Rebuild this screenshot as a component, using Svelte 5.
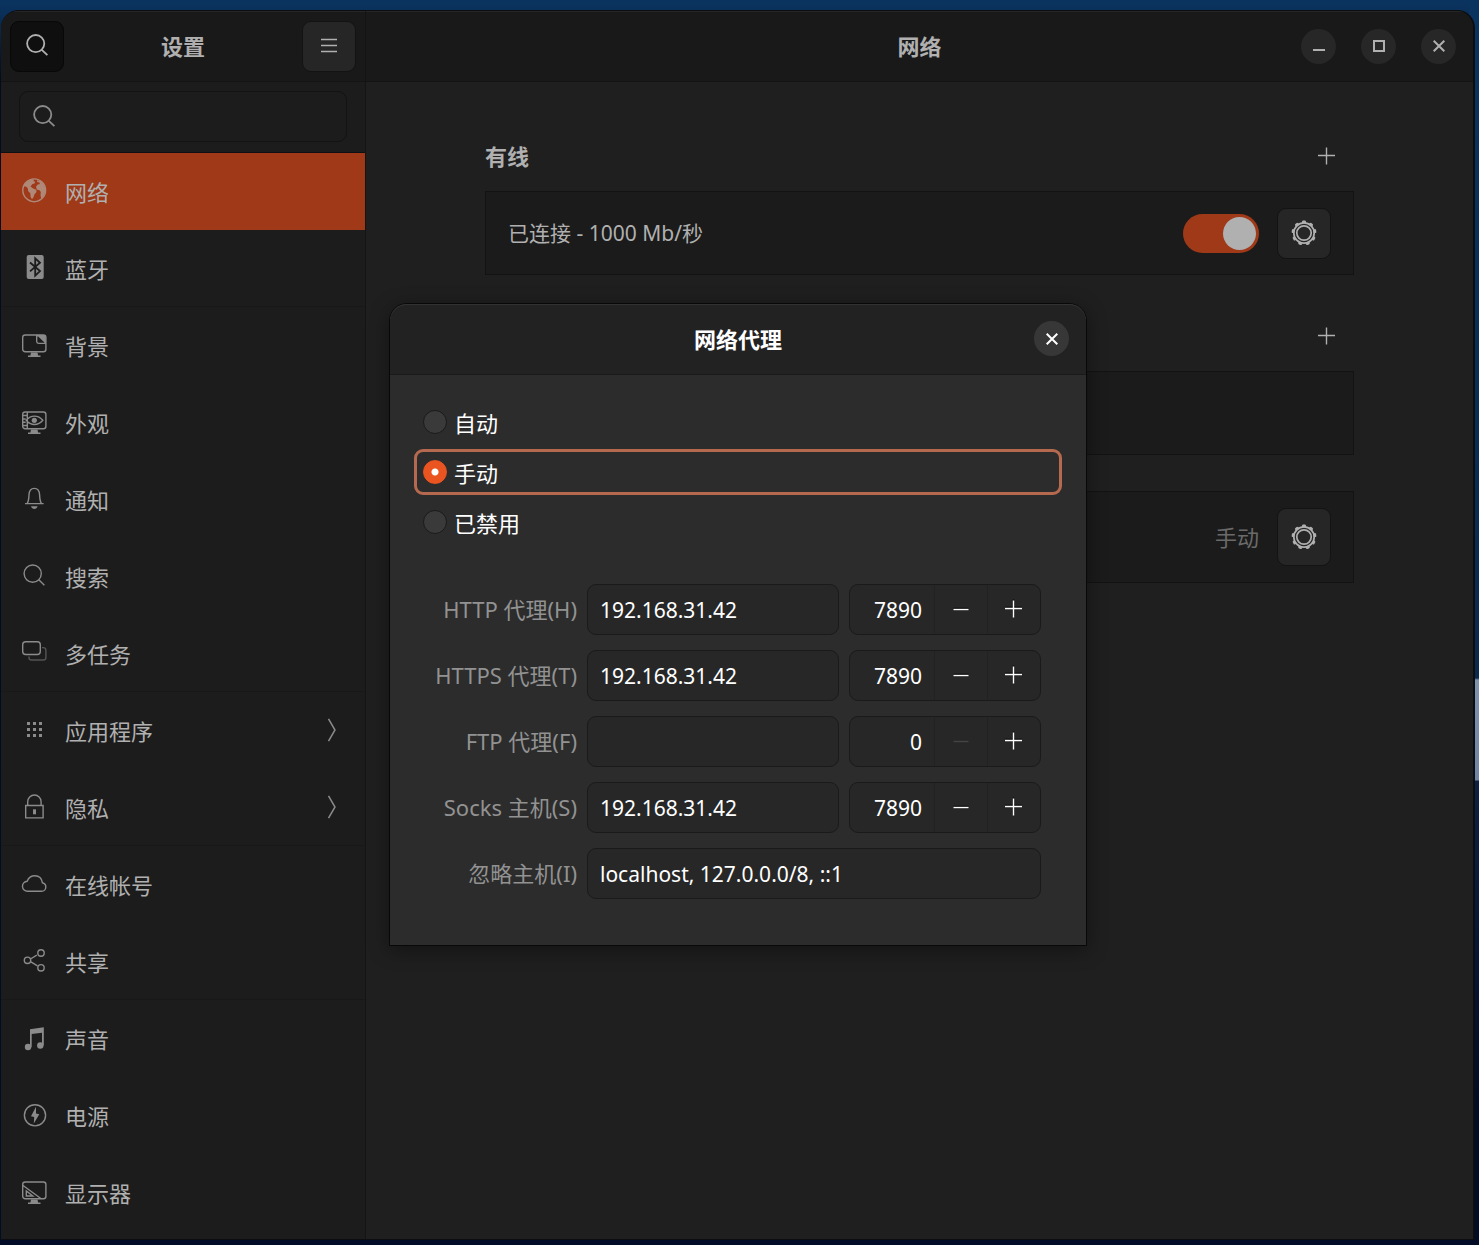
<script>
  const groups = [
    [
      { icon: 'globe', label: '网络' },
      { icon: 'bluetooth', label: '蓝牙' },
    ],
    [
      { icon: 'background', label: '背景' },
      { icon: 'appearance', label: '外观' },
      { icon: 'bell', label: '通知' },
      { icon: 'search', label: '搜索' },
      { icon: 'multitask', label: '多任务' },
    ],
    [
      { icon: 'apps', label: '应用程序', more: true },
      { icon: 'lock', label: '隐私', more: true },
    ],
    [
      { icon: 'cloud', label: '在线帐号' },
      { icon: 'share', label: '共享' },
    ],
    [
      { icon: 'music', label: '声音' },
      { icon: 'power', label: '电源' },
      { icon: 'display', label: '显示器' },
    ],
  ];

  const modes = ['自动', '手动', '已禁用'];
  const teeth = Array.from({ length: 9 }, (_, i) => i * 40);

  let current = $state('网络');
  let wired = $state(true);
  let mode = $state('手动');
  let ignored = $state('localhost, 127.0.0.0/8, ::1');
  let proxies = $state([
    { id: 'http', label: 'HTTP 代理(H)', host: '192.168.31.42', port: 7890 },
    { id: 'https', label: 'HTTPS 代理(T)', host: '192.168.31.42', port: 7890 },
    { id: 'ftp', label: 'FTP 代理(F)', host: '', port: 0 },
    { id: 'socks', label: 'Socks 主机(S)', host: '192.168.31.42', port: 7890 },
  ]);
</script>

{#snippet monitor()}
  <rect x="1.7" y="3" width="23.2" height="16.8" rx="2.5" />
  <path class="fill" d="M10 20.5h6.5l.6 3h2.4v1.6H7v-1.6h2.4z" />
{/snippet}

{#snippet icon(name)}
  <svg class="icon" viewBox="0 0 26 26" width="26" height="26" aria-hidden="true">
    {#if name === 'globe'}
      <circle cx="13.2" cy="12.3" r="11.4" />
      <path class="fill" d="M3 6.5 6.5 3l4-1.8 2.6.4-.6 1.6 1.7.5-.4 1.6-2.6 1-1.7 2.2 2.6 2.1 3.2 1.2.2 2.2-2 2.2-.9 2.9-1.6 2.2-1.4-2.3-.3-3.7-2.2-2.2-.2-2.6L5 8.6 2.2 8.2z" />
      <path class="fill" d="m16 2.2 3.2.6 3.1 3.3 1.7 3.5.3 4.2-1.8 4.4-2.2 2.6-.8-3.2.3-3.5-1.3-1.8-2.7-.8-.8-2.6 1.3-2.1 2.6-.7-.5-1.6-2.2-.5z" />
    {:else if name === 'bluetooth'}
      <rect class="fill" x="5.7" y="0" width="17" height="24" rx="2" />
      <path class="cut" d="m9 7.5 10 8.6-4.8 4.6V3.4L19 7.8 9 16.4" />
    {:else if name === 'background'}
      {@render monitor()}
      <path class="fill" d="M15 3h7.5a2.4 2.4 0 0 1 2.4 2.4v6.6H18a3 3 0 0 1-3-3z" />
      <path class="hole" d="M16.4 4.4h.8l6.5 6.4H18a1.6 1.6 0 0 1-1.6-1.6z" />
    {:else if name === 'appearance'}
      {@render monitor()}
      <path d="M6.3 3v16.8M1.7 6.5h4.6M1.7 10h3M1.7 13.3h3M1.7 16.5h4.6M5.2 11.3c4.6-5.6 12-5.6 16.6 0-4.6 5.6-12 5.6-16.6 0z" />
      <circle class="fill" cx="13.3" cy="11.3" r="2.6" />
    {:else if name === 'bell'}
      <path d="M4 17.6h18.6M6 17.6c1.8-2.2 1.8-5 2-8.8.2-4 2-6.4 5.3-6.4s5.1 2.4 5.3 6.4c.2 3.8.2 6.6 2 8.8" />
      <path class="fill" d="M10 20.3h6.6c-.6 1.8-1.8 2.7-3.3 2.7s-2.7-.9-3.3-2.7z" />
    {:else if name === 'search'}
      <circle cx="11.7" cy="10.6" r="8.6" />
      <path d="m17.8 16.8 5.6 5.4" />
    {:else if name === 'multitask'}
      <rect x="1.7" y="1.7" width="17.6" height="12.8" rx="3" />
      <path class="faint" d="M21 7.6h1.3a2.6 2.6 0 0 1 2.6 2.6v7.2a2.6 2.6 0 0 1-2.6 2.6H10.6a2.6 2.6 0 0 1-2.6-2.6V16.4" />
    {:else if name === 'apps'}
      {#each [6, 12, 18] as x}
        {#each [5, 11, 17] as y}
          <rect class="fill" {x} {y} width="3" height="3" />
        {/each}
      {/each}
    {:else if name === 'lock'}
      <path d="M4.7 11.5h17.4v12.4H4.7zM6.7 11.5V7.7a6.7 6.7 0 0 1 13.4 0v3.8" />
      <rect class="fill" x="12" y="15.3" width="3" height="5" />
    {:else if name === 'cloud'}
      <path d="M6.8 20.3a5 5 0 0 1-.6-10.1C7.5 6.6 10.5 4.7 13.9 4.7c4 0 6.9 2.9 7.5 7 2.1.5 3.4 2.2 3.4 4.2 0 2.5-1.8 4.4-4.2 4.4z" />
    {:else if name === 'share'}
      <circle cx="6.5" cy="12.3" r="3.2" /><circle cx="20" cy="5" r="3.2" /><circle cx="20" cy="19.8" r="3.2" />
      <path d="m9.5 11 6.3-3.8M9.5 13.6l7 4.2" />
    {:else if name === 'music'}
      <path class="fill" d="M9 4.3 22.8 2.3V20.3h-1.8V7.7L10.7 9v13.2H9z" />
      <circle class="fill" cx="7" cy="22" r="3.2" /><circle class="fill" cx="19.3" cy="20.5" r="3.2" />
    {:else if name === 'power'}
      <circle cx="14" cy="13.3" r="10.6" />
      <path class="fill" d="m15 4.8-5 9.4 3.2.7-.4 6.7 5.5-9.4-3.3-.8z" />
    {:else if name === 'display'}
      {@render monitor()}
      <path d="m1.7 6.3 18.5 13.5M5.3 12v5h6.5z" />
    {/if}
  </svg>
{/snippet}

{#snippet gear()}
  <svg class="gear" viewBox="0 0 26 26" width="26" height="26" aria-hidden="true">
    <circle cx="13" cy="13" r="7.2" />
    <circle cx="13" cy="13" r="10.2" />
    {#each teeth as angle}
      <rect class="fill" x="11" y="0.6" width="4" height="3" rx="1.2" transform="rotate({angle} 13 13)" />
    {/each}
  </svg>
{/snippet}

{#snippet plus()}
  <svg class="glyph" viewBox="0 0 18 18" width="18" height="18" aria-hidden="true">
    <path d="M8.5.5v17M0 8.5h17" />
  </svg>
{/snippet}

<div class="desktop">
  <div class="window">
    <aside class="sidebar">
      <header class="bar side-bar">
        <button class="tool pressed" aria-label="搜索">{@render icon('search')}</button>
        <h1>设置</h1>
        <button class="tool" aria-label="菜单">
          <svg class="glyph" viewBox="0 0 18 18" width="18" height="18" aria-hidden="true">
            <path d="M1 2.5h16M1 8.5h16M1 14.5h16" />
          </svg>
        </button>
      </header>
      <div class="search-row">
        <label class="search">
          {@render icon('search')}
          <input type="search" aria-label="搜索设置" />
        </label>
      </div>
      <nav>
        {#each groups as group}
          <ul>
            {#each group as item}
              <li>
                <button class="item" class:active={item.label === current} onclick={() => (current = item.label)}>
                  {@render icon(item.icon)}
                  <span>{item.label}</span>
                  {#if item.more}
                    <svg class="chevron" viewBox="0 0 10 24" width="10" height="24" aria-hidden="true">
                      <path d="m1.5.8 6.500 11.200-6.500 11.200" />
                    </svg>
                  {/if}
                </button>
              </li>
            {/each}
          </ul>
        {/each}
      </nav>
    </aside>

    <main>
      <header class="bar main-bar">
        <span></span>
        <h1>网络</h1>
        <div class="controls">
          <button class="round" aria-label="最小化">
            <svg viewBox="0 0 12 12" width="12" height="12" aria-hidden="true"><path d="M0 10h12" /></svg>
          </button>
          <button class="round" aria-label="最大化">
            <svg viewBox="0 0 12 12" width="12" height="12" aria-hidden="true"><path d="M1 1h10v10H1z" /></svg>
          </button>
          <button class="round" aria-label="关闭">
            <svg viewBox="0 0 12 12" width="12" height="12" aria-hidden="true"><path d="m.7.7 10.600 10.600M11.300.7.7 11.300" /></svg>
          </button>
        </div>
      </header>

      <div class="content">
        <section>
          <div class="heading">
            <h2>有线</h2>
            <button class="add" aria-label="添加有线连接">{@render plus()}</button>
          </div>
          <div class="card">
            <label class="grow" for="wired">已连接 - 1000 Mb/秒</label>
            <input id="wired" class="switch" type="checkbox" role="switch" bind:checked={wired} />
            <button class="tool" aria-label="有线选项">{@render gear()}</button>
          </div>
        </section>

        <section aria-label="VPN">
          <div class="heading">
            <span></span>
            <button class="add" aria-label="添加 VPN">{@render plus()}</button>
          </div>
          <div class="card"></div>
        </section>

        <section class="proxy" aria-label="网络代理">
          <div class="card tall">
            <span class="grow"></span>
            <span class="status">手动</span>
            <button class="tool" aria-label="代理选项">{@render gear()}</button>
          </div>
        </section>
      </div>
    </main>

    <div class="overlay">
      <div class="dialog" role="dialog" aria-labelledby="dialog-title">
        <header>
          <span></span>
          <h2 id="dialog-title">网络代理</h2>
          <button class="round" aria-label="关闭对话框">
            <svg viewBox="0 0 12 12" width="12" height="12" aria-hidden="true"><path d="m.7.7 10.600 10.600M11.300.7.7 11.300" /></svg>
          </button>
        </header>
        <div class="modes">
          {#each modes as name}
            <label class:chosen={mode === name}>
              <input type="radio" name="mode" value={name} bind:group={mode} />
              <span>{name}</span>
            </label>
          {/each}
        </div>
        <form>
          {#each proxies as proxy}
            <label for={proxy.id}>{proxy.label}</label>
            <input class="entry" id={proxy.id} type="text" bind:value={proxy.host} />
            <div class="spin">
              <input type="text" inputmode="numeric" aria-label="{proxy.label} 端口" bind:value={proxy.port} />
              <button type="button" aria-label="减少" disabled={proxy.port === 0} onclick={() => (proxy.port -= 1)}>
                <svg class="glyph" viewBox="0 0 18 18" width="18" height="18" aria-hidden="true"><path d="M1.500 9.500h15" /></svg>
              </button>
              <button type="button" aria-label="增加" onclick={() => (proxy.port += 1)}>{@render plus()}</button>
            </div>
          {/each}
          <label for="ignored">忽略主机(I)</label>
          <input class="entry wide" id="ignored" type="text" bind:value={ignored} />
        </form>
      </div>
    </div>
  </div>
</div>

<style>
  :global(body) {
    margin: 0;
    background: #020c26;
  }

  .desktop,
  .desktop * {
    box-sizing: border-box;
  }

  .desktop {
    display: flex;
    min-height: 100vh;
    padding: 10px 4px 5px 1px;
    font: 22px/32px 'Noto Sans', 'Noto Sans CJK SC', sans-serif;
    color: #b0b0b0;
    background:
      linear-gradient(#0a3460, #093058 300px, #0a2a4c 678px, #8093ad 680px, #6f84a3 780px, #0e2144 781px, #020c26 1100px) right / 10px 100% no-repeat,
      linear-gradient(#0a3460, #0a305a 12px, #020c1c 80px, #020c26);
  }

  h1,
  h2 {
    margin: 0;
    font-size: 22px;
    line-height: 32px;
    font-weight: 700;
  }

  button,
  input {
    margin: 0;
    padding: 0;
    border: 0;
    font: inherit;
    color: inherit;
    background: none;
    outline: none;
  }

  button {
    display: flex;
    align-items: center;
    justify-content: center;
  }

  ul {
    margin: 0;
    padding: 0;
    list-style: none;
  }

  svg {
    flex: none;
    fill: none;
    stroke: currentColor;
    stroke-width: 2;
  }

  .icon {
    color: #8b8b8b;
    stroke-width: 1.4;
  }

  .glyph {
    stroke-width: 1.4;
  }

  .gear {
    stroke-width: 1.7;
  }

  svg .fill {
    fill: currentColor;
    stroke: none;
  }

  svg .cut {
    stroke: #1c1c1c;
    stroke-width: 1.8;
  }

  svg .hole {
    fill: #1c1c1c;
    stroke: none;
  }

  svg .faint {
    opacity: 0.5;
  }

  .window {
    position: relative;
    display: flex;
    flex: 1;
    border: solid #0b0d10;
    border-width: 1px 2px 1px 0;
    border-radius: 18px 18px 0 0;
    overflow: hidden;
    background: #1f1f1f;
  }

  .bar {
    height: 71px;
    border-bottom: 1px solid #131313;
    background: #191919;
    box-shadow: inset 0 1px #262626;
  }

  .sidebar {
    flex: none;
    width: 365px;
    border-right: 1px solid #141414;
    background: #1c1c1c;
  }

  .side-bar {
    display: flex;
    align-items: center;
    justify-content: space-between;
    padding: 0 9px;
  }

  .tool {
    width: 54px;
    height: 51px;
    border: 1px solid #131313;
    border-radius: 9px;
    background: #262626;
  }

  .tool.pressed {
    border-color: #080808;
    background: #0f0f0f;
  }

  .pressed .icon {
    color: #b0b0b0;
    stroke-width: 1.8;
  }

  .search-row {
    padding: 9px 18px 10px;
    border-bottom: 1px solid #0e1013;
  }

  .search {
    display: flex;
    align-items: center;
    gap: 8px;
    height: 51px;
    padding: 0 11px;
    border: 1px solid #131313;
    border-radius: 9px;
  }

  .search .icon {
    stroke-width: 1.8;
  }

  .search input {
    flex: 1;
    min-width: 0;
  }

  .item {
    width: 100%;
    height: 77px;
    gap: 18px;
    padding: 0 28px 0 20px;
    border-bottom: 1px solid transparent;
  }

  .item span {
    flex: 1;
    padding-top: 2px;
    text-align: left;
  }

  ul + ul {
    box-shadow: 0 -1px #181818;
  }

  .item.active {
    background: #9f3918;
  }

  .active .icon {
    color: #b08878;
  }

  .chevron {
    color: #8b8b8b;
    stroke-width: 1.5;
  }

  main {
    flex: 1;
    min-width: 0;
  }

  .main-bar,
  .dialog header {
    display: grid;
    grid-template-columns: 1fr auto 1fr;
    align-items: center;
    padding: 0 17px;
  }

  .controls {
    display: flex;
    justify-content: flex-end;
    gap: 25px;
  }

  .round {
    justify-self: end;
    width: 35px;
    height: 35px;
    border-radius: 50%;
    background: #272727;
  }

  .content {
    max-width: 869px;
    margin: 0 auto;
    padding-top: 39px;
  }

  .heading {
    display: flex;
    align-items: center;
    justify-content: space-between;
    height: 70px;
  }

  .add {
    width: 54px;
    height: 51px;
  }

  .card {
    display: flex;
    align-items: center;
    gap: 18px;
    height: 84px;
    padding: 0 22px;
    border: 1px solid #131313;
    background: #1b1b1b;
  }

  section + section {
    margin-top: 26px;
  }

  section.proxy {
    margin-top: 36px;
  }

  .card.tall {
    height: 92px;
  }

  .tall .tool {
    height: 58px;
  }

  .grow {
    flex: 1;
    font-size: 21px;
  }

  .status {
    color: #6a6a6a;
  }

  .switch {
    appearance: none;
    width: 76px;
    height: 39px;
    padding: 3px;
    border-radius: 20px;
    background: #333;
  }

  .switch::before {
    content: '';
    display: block;
    width: 33px;
    height: 33px;
    border-radius: 50%;
    background: #b0b0b0;
  }

  .switch:checked {
    background: #9f3918;
  }

  .switch:checked::before {
    margin-left: auto;
  }

  .overlay {
    position: absolute;
    inset: 0;
    display: grid;
    place-items: center;
    padding: 0 0 2px 2px;
  }

  .dialog {
    width: 698px;
    border: 1px solid #080808;
    border-radius: 18px 18px 0 0;
    color: #fff;
    background: #2c2c2c;
    box-shadow: 0 4px 20px rgb(0 0 0 / 40%);
  }

  .dialog header {
    height: 71px;
    border-bottom: 1px solid #1a1a1a;
    border-radius: 17px 17px 0 0;
    background: #222;
    box-shadow: inset 0 1px #323232;
  }

  .dialog .round {
    background: #373737;
  }

  .modes {
    display: grid;
    gap: 4px;
    padding: 24px 24px 0;
  }

  .modes label {
    display: flex;
    align-items: center;
    gap: 7px;
    height: 46px;
    padding: 0 6px;
    border: 3px solid transparent;
    border-radius: 9px;
  }

  .modes label.chosen {
    border-color: #b5694f;
  }

  .modes input {
    appearance: none;
    width: 24px;
    height: 24px;
    border: 1px solid #1a1a1a;
    border-radius: 50%;
    background: #3a3a3a;
  }

  .modes input:checked {
    border-color: #e95420;
    background: radial-gradient(circle, #fff 3px, #e95420 4px);
  }

  .modes span {
    padding-top: 2px;
  }

  form {
    display: grid;
    grid-template-columns: 1fr 252px 192px;
    gap: 15px 10px;
    align-items: center;
    padding: 39px 45px 46px 24px;
  }

  form label {
    justify-self: end;
    color: #929292;
  }

  .entry,
  .spin {
    width: 100%;
    height: 51px;
    border: 1px solid #1a1a1a;
    border-radius: 9px;
    background: #272727;
  }

  .entry,
  .spin input {
    font-size: 21px;
    padding: 2px 12px 0;
  }

  .entry.wide {
    grid-column: span 2;
  }

  .spin {
    display: flex;
  }

  .spin input {
    flex: 1;
    min-width: 0;
    text-align: right;
  }

  .spin button {
    width: 53px;
    border-left: 1px solid #222;
  }

  .spin .glyph {
    filter: drop-shadow(0 -1px 0 #000);
  }

  .spin button:disabled {
    color: #444;
  }

  .spin button:disabled .glyph {
    filter: none;
  }
</style>
